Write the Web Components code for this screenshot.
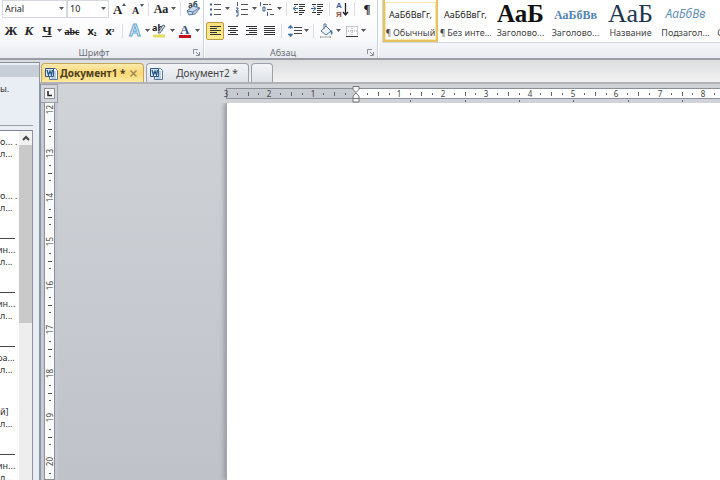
<!DOCTYPE html>
<html lang="ru">
<head>
<meta charset="utf-8">
<title>Документ1</title>
<style>
  html, body { height: 100%; }
  body { margin: 0; overflow: hidden; font: 9px/12px "Noto Sans", "Open Sans", sans-serif; color: #333; }
</style>
</head>
<body>
<word-app></word-app>
<script>
const define = (name, html, setup) => {
  const template = document.createElement('template');
  template.innerHTML = html;
  customElements.define(name, class extends HTMLElement {
    constructor() {
      super();
      this.attachShadow({ mode: 'open' }).append(template.content.cloneNode(true));
    }
    connectedCallback() { if (setup) setup(this, this.shadowRoot); }
  });
};

const rows = (x, widths, y = 4) => widths.map((w, i) => `<path d="M${x} ${y + i * 2}.5h${w}" stroke="#333"/>`).join('');
const icons = {
  grow: '<text x="4" y="14" font-size="13" font-weight="700">A</text><path d="M13 6l2-3 2 3z" fill="#456"/>',
  shrink: '<text x="5" y="14" font-size="10" font-weight="700">A</text><path d="M13 4h4l-2 3z" fill="#456"/>',
  clear: '<text x="4" y="8" font-size="8" fill="#345" font-family="Noto Sans">аб</text><path d="M3 11l6-5 7 2-5 6-6 1z" fill="#c9daee" stroke="#58779e"/><path d="M3 11l6 1 6-4M9 12l-1 3" fill="none" stroke="#58779e"/>',
  effects: '<text x="3" y="14" font-size="16" fill="#e8f5fd" stroke="#65a5d2" stroke-width="1" font-family="Liberation Sans">A</text>',
  marker: '<text x="1" y="9" font-size="9" font-weight="700" font-family="Noto Sans">ab</text><path d="M7 11l5-8 2 1-5 7z" fill="#dce5ee" stroke="#567"/><path d="M2 14h12" stroke="#e2dc62" stroke-width="3"/>',
  color: '<text x="4" y="12" font-size="13" font-weight="700" fill="#36517c">A</text><path d="M3 14.5h12" stroke="#c3121b" stroke-width="3"/>',
  bullets: '<path d="M4 4.500h2M4 9.500h2M4 14.500h2" stroke="#3c5f91" stroke-width="2"/><path d="M8 4.500h7M8 9.500h7M8 14.500h7" stroke="#555"/>',
  numbers: '<path d="M4.500 2v4M3 8h2v1l-2 2h3M3 12h2v4H3" fill="none" stroke="#3c5f91"/><path d="M8 4.500h7M8 9.500h7M8 14.500h7" stroke="#555"/>',
  multi: '<path d="M2.500 2v4M5 7h2v4H5zM9.500 12v4" fill="none" stroke="#3c5f91"/><path d="M5 4.500h8M9 9.500h6M12 14.500h4" stroke="#555" stroke-dasharray="5 1"/>',
  outdent: '<path d="M4 4.500h4M9 4.500h6M9 6.500h6M9 8.500h4M9 10.500h6M4 12.500h4M9 12.500h5M9 14.500h3" stroke="#333"/><path d="M8 8.500H4M6 6L3 8.500 6 11" fill="none" stroke="#3465a4"/>',
  indent: '<path d="M4 4.500h4M9 4.500h6M9 6.500h6M9 8.500h4M9 10.500h6M4 12.500h4M9 12.500h5M9 14.500h3" stroke="#333"/><path d="M3 8.500h4M5 6l3 2.500L5 11" fill="none" stroke="#3465a4"/>',
  sort: '<text x="3" y="8" font-size="8" fill="#345da0" font-family="Liberation Sans">А</text><text x="3" y="17" font-size="8" fill="#8d4b39" font-family="Liberation Sans">Я</text><path d="M12.500 3v11M10 12l2.500 3 2.500-3" fill="none" stroke="#222" stroke-width="1.300"/>',
  left: rows(4, [11, 7, 11, 7, 11]),
  center: '<path d="M4 4.500h10M6 6.500h6M4 8.500h10M6 10.500h6M4 12.500h10" stroke="#333"/>',
  right: '<path d="M4 4.500h11M7 6.500h8M4 8.500h11M7 10.500h8M4 12.500h11" stroke="#333"/>',
  justify: rows(4, [11, 11, 11, 11, 11]),
  spacing: '<path d="M9 5.500h8M9 8.500h8M9 11.500h8" stroke="#444"/><path d="M5.500 4v3M5.500 11v3M3 6l2.500-3L8 6zM3 12l2.500 3L8 12z" fill="#3d75a8" stroke="#3d75a8" stroke-width=".5"/>',
  fill: '<path d="M4 9l5-5 5 5-5 4z" fill="#eef3f8" stroke="#547595"/><path d="M9 4V2H7v5" fill="none" stroke="#547595"/><path d="M13 8c3 0 3 3 2 5-2-1-1-3-2-5z" fill="#3c77ae"/><path d="M3 15h11" stroke="#aaa" stroke-width="2"/><path d="M4 15h9" stroke="#f4f4f4"/>',
  borders: '<path d="M4.500 4.500h11v9M4.500 4.500v9M10 4v9M4 9h12" fill="none" stroke="#999" stroke-dasharray="1 1"/><path d="M4 14.500h12" stroke="#333"/>'
};

/* One ribbon command; "split" adds a drop-down arrow. */
define('tool-button', `
<style>
  :host { display: flex; flex: none; }
  button { all: unset; display: flex; align-items: center; justify-content: center; box-sizing: border-box; width: 18px; height: 18px; color: #222; font-family: "Liberation Serif", serif; font-size: 13px; font-weight: 700; line-height: 18px; }
  :host([split]) button { width: 25px; }
  .face { display: block; min-width: 18px; text-align: center; white-space: nowrap; }
  .face svg { display: block; }
  .arrow { display: none; width: 7px; height: 4px; }
  :host([split]) .arrow { display: block; }
  :host([pressed]) button { background: linear-gradient(#fbdf7c, #faec90); border: 1px solid #bd9b45; border-radius: 2px; }
</style>
<button type="button"><span class="face"><slot></slot></span><svg class="arrow" viewBox="0 0 7 4"><path d="M1 0h5L3.500 3z" fill="#555"/></svg></button>`,
(host, root) => {
  root.querySelector('button').setAttribute('aria-label', host.getAttribute('label'));
  const icon = host.getAttribute('icon');
  if (icon) root.querySelector('.face').innerHTML = `<svg width="18" height="18" viewBox="0 0 18 18" fill="#222" font-family="Liberation Serif, serif">${icons[icon]}</svg>`;
});

define('tool-divider', `<style>:host { flex: none; width: 1px; height: 14px; margin: 0 3px; background: #d9dce2; }</style>`);

define('tool-combo', `
<style>
  :host { display: block; flex: none; width: var(--combo, 65px); position: relative; }
  select { appearance: none; display: block; box-sizing: border-box; width: 100%; height: 18px; margin: 0; padding: 0 2px; border: 1px solid #d5d8de; border-radius: 0; background: #fff; color: #222; font: 9px/16px "Noto Sans", sans-serif; }
  svg { position: absolute; right: 2px; top: 7px; width: 7px; height: 4px; pointer-events: none; }
</style>
<select><option></option></select><svg viewBox="0 0 7 4"><path d="M1 0h5L3.500 3z" fill="#555"/></svg>`,
(host, root) => {
  root.querySelector('select').setAttribute('aria-label', host.getAttribute('label'));
  root.querySelector('option').textContent = host.getAttribute('value');
});

define('ribbon-group', `
<style>
  :host { display: grid; grid-template-rows: 18px 18px 1fr; row-gap: 4px; flex: none; box-sizing: border-box; border-right: 1px solid #cdd1d8; box-shadow: 1px 0 #fff; padding: 0 2px; position: relative; }
  div { display: flex; align-items: center; }
  footer { display: flex; align-items: center; justify-content: center; padding: 4px 16px 0 0; color: #6b6f77; font-size: 9px; line-height: 10px; }
  svg { position: absolute; right: 3px; bottom: 2px; }
</style>
<div><slot name="top"></slot></div>
<div><slot name="bottom"></slot></div>
<footer><slot></slot></footer>
<svg width="7" height="7" viewBox="0 0 7 7" fill="none" stroke="#8b909a"><path d="M.5 5V.5H5M3 3l3 3M6.500 3v3.500H3"/></svg>`);

define('style-card', `
<style>
  :host { display: block; flex: none; width: 55px; }
  button { all: unset; box-sizing: border-box; display: grid; grid-template-columns: 100%; grid-template-rows: 23px 16px; width: 55px; height: 42px; padding-top: 1px; border: 2px solid transparent; border-top: 0; text-align: center; overflow: hidden; }
  :host([selected]) button { border: 2px solid #e6c361; border-top: 0; outline: 1px solid #f8e7ad; outline-offset: -3px; }
  .sample { display: block; height: 23px; overflow: hidden; white-space: nowrap; font: var(--sample, 9px/28px "Noto Sans", sans-serif); color: var(--ink, #222); }
  .name { font-size: 9px; line-height: 18px; white-space: nowrap; color: #444; }
  .mark { font-size: 8px; margin-right: 2px; }
  .mark:empty { display: none; }
</style>
<button type="button"><span class="sample"></span><span class="name"><span class="mark"></span><span class="label"></span></span></button>`,
(host, root) => {
  root.querySelector('.sample').textContent = host.getAttribute('sample');
  root.querySelector('.mark').textContent = host.hasAttribute('paragraph') ? '¶' : '';
  root.querySelector('.label').textContent = host.getAttribute('name');
});

define('style-gallery', `
<style>
  :host { display: block; flex: 1; min-width: 0; padding-left: 4px; overflow: hidden; }
  div { display: flex; height: 42px; background: #fff; border: 1px solid #d3d6dc; border-top: 0; border-right: 0; }
  .h1 { --sample: 700 25px/26px "Liberation Serif", serif; --ink: #111; }
  .h2 { --sample: 700 12px/28px "Liberation Serif", serif; --ink: #5384b0; }
  .title { --sample: 26px/26px "Liberation Serif", serif; --ink: #1e3550; }
  .sub { --sample: italic 12px/26px "Noto Sans", serif; --ink: #6390b5; }
</style>
<div>
  <style-card selected paragraph sample="АаБбВвГг," name="Обычный"></style-card>
  <style-card paragraph sample="АаБбВвГг," name="Без инте..."></style-card>
  <style-card class="h1" sample="АаБ" name="Заголово..."></style-card>
  <style-card class="h2" sample="АаБбВв" name="Заголово..."></style-card>
  <style-card class="title" sample="АаБ" name="Название"></style-card>
  <style-card class="sub" sample="АаБбВв" name="Подзагол..."></style-card>
  <style-card class="sub" sample="АаБбВв" name="Слабое в..."></style-card>
</div>`);

define('word-ribbon', `
<style>
  :host { display: flex; box-sizing: border-box; height: 60px; background: linear-gradient(#fff, #fbfbfd 60%, #e9ebf1); border-bottom: 2px solid #9a9da6; }
  .size { --combo: 42px; }
  .font { width: 204px; }
  .para { width: 174px; }
  tool-button.wide { margin-right: 2px; }
  small { font-size: 7px; line-height: 8px; }
  .struck { font-size: 10px; }
  .x { font: 700 11px/18px "Noto Sans", sans-serif; }
  .aa { font-size: 12px; }
</style>
<ribbon-group class="font">
  <tool-combo slot="top" label="Шрифт" value="Arial"></tool-combo>
  <tool-combo slot="top" class="size" label="Размер шрифта" value="10"></tool-combo>
  <tool-button slot="top" label="Увеличить размер" icon="grow"></tool-button>
  <tool-button slot="top" label="Уменьшить размер" icon="shrink"></tool-button>
  <tool-divider slot="top"></tool-divider>
  <tool-button slot="top" split label="Регистр"><span class="aa">Aa</span></tool-button>
  <tool-divider slot="top"></tool-divider>
  <tool-button slot="top" label="Очистить формат" icon="clear"></tool-button>
  <tool-button slot="bottom" label="Полужирный">Ж</tool-button>
  <tool-button slot="bottom" label="Курсив"><i>К</i></tool-button>
  <tool-button slot="bottom" split label="Подчеркнутый"><u>Ч</u></tool-button>
  <tool-button slot="bottom" class="wide" label="Зачеркнутый"><s class="struck">abc</s></tool-button>
  <tool-button slot="bottom" label="Подстрочный"><span class="x">x<small>₂</small></span></tool-button>
  <tool-button slot="bottom" label="Надстрочный"><span class="x">x<small>²</small></span></tool-button>
  <tool-divider slot="bottom"></tool-divider>
  <tool-button slot="bottom" split label="Эффекты" icon="effects"></tool-button>
  <tool-button slot="bottom" split label="Выделение" icon="marker"></tool-button>
  <tool-button slot="bottom" split label="Цвет текста" icon="color"></tool-button>
  Шрифт
</ribbon-group>
<ribbon-group class="para">
  <tool-button slot="top" class="wide" split label="Маркеры" icon="bullets"></tool-button>
  <tool-button slot="top" split label="Нумерация" icon="numbers"></tool-button>
  <tool-button slot="top" split label="Многоуровневый список" icon="multi"></tool-button>
  <tool-divider slot="top"></tool-divider>
  <tool-button slot="top" label="Уменьшить отступ" icon="outdent"></tool-button>
  <tool-button slot="top" label="Увеличить отступ" icon="indent"></tool-button>
  <tool-divider slot="top"></tool-divider>
  <tool-button slot="top" label="Сортировка" icon="sort"></tool-button>
  <tool-divider slot="top"></tool-divider>
  <tool-button slot="top" label="Знаки абзаца">¶</tool-button>
  <tool-button slot="bottom" pressed label="По левому краю" icon="left"></tool-button>
  <tool-button slot="bottom" label="По центру" icon="center"></tool-button>
  <tool-button slot="bottom" label="По правому краю" icon="right"></tool-button>
  <tool-button slot="bottom" label="По ширине" icon="justify"></tool-button>
  <tool-divider slot="bottom"></tool-divider>
  <tool-button slot="bottom" split label="Интервал" icon="spacing"></tool-button>
  <tool-divider slot="bottom"></tool-divider>
  <tool-button slot="bottom" split label="Заливка" icon="fill"></tool-button>
  <tool-button slot="bottom" split label="Границы" icon="borders"></tool-button>
  Абзац
</ribbon-group>
<style-gallery></style-gallery>`);

define('side-pane', `
<style>
  :host { display: flex; flex-direction: column; flex: none; box-sizing: border-box; width: 40px; margin-top: 2px; border-top: 1px solid #8c929c; border-right: 1px solid #8c95a3; background: #e9edf4; overflow: hidden; }
  header { flex: none; height: 12px; margin-top: 2px; background: #c8ced8; }
  p { margin: 0; height: 12px; white-space: nowrap; color: #333; }
  .note { flex: none; height: 42px; padding-top: 6px; margin-right: 6px; border-bottom: 1px solid #9aa1ad; }
  .list { flex: 1; display: flex; min-height: 0; margin: 4px 6px 0 0; border-top: 1px solid #7f8794; border-right: 1px solid #8c95a3; background: #fff; }
  .items { flex: 1; min-width: 0; overflow: hidden; }
  article { display: grid; row-gap: 30px; margin-right: 4px; padding: 5px 0 24px; border-bottom: 1px solid #444; }
  article p.cut { margin-left: -3px; }
  .bar { flex: none; width: 13px; background: #eee; }
  .bar button { all: unset; display: block; width: 13px; height: 14px; background: #f1f1f1; }
  .bar svg { display: block; }
  .thumb { height: 178px; background: #c9c9c9; }
</style>
<header></header>
<div class="note"><p>ы.</p></div>
<div class="list">
  <div class="items">
    <article><div><p>о... .</p><p>л...</p></div><div><p>о... .</p><p>л...</p></div></article>
    <article><div><p class="cut">ин...</p><p>л...</p></div></article>
    <article><div><p class="cut">ин...</p><p>л...</p></div></article>
    <article><div><p class="cut">ра...</p><p>л...</p></div><div><p>й]</p><p>л...</p></div></article>
    <article><div><p class="cut">ин...</p><p>л...</p></div></article>
  </div>
  <div class="bar"><button type="button" aria-label="Вверх"><svg width="13" height="14" viewBox="0 0 13 14"><path d="M4 9l3-3 3 3" fill="none" stroke="#444" stroke-width="2"/></svg></button><div class="thumb"></div></div>
</div>`);

define('doc-tab', `
<style>
  :host { display: block; flex: none; width: 103px; }
  :host([blank]) { width: 22px; }
  div { display: flex; align-items: center; box-sizing: border-box; height: 19px; padding: 0 5px 0 3px; border: 1px solid #9ba1aa; border-bottom: 0; border-radius: 4px 4px 0 0; background: linear-gradient(#f3f4f6, #dfe3e9); color: #444; }
  :host([active]) div { background: linear-gradient(#fdeaae, #fbd873 50%, #fde9a0); border-color: #c2a45c; font-weight: 700; color: #4a4125; }
  button { all: unset; }
  .title { flex: 1; padding-left: 8px; text-align: center; white-space: nowrap; font-size: 10px; line-height: 16px; }
  :host([active]) .title { padding-left: 2px; text-align: left; }
  .close, svg { flex: none; }
  .close { display: none; }
  .close svg, .icon { display: block; }
  :host([active]) .close { display: block; }
  :host([blank]) .icon { display: none; }
</style>
<div>
  <svg class="icon" width="13" height="13" viewBox="0 0 13 13"><path d="M4.500 1.500h6l2 2v9h-8z" fill="#fff" stroke="#55789f"/><path d="M9 5h2M9 7h2M9 9h2M6 11h5" stroke="#7c9abd"/><path d="M.5 1.500h8v8h-8z" fill="#dfeaf6" stroke="#2d5b91"/><path d="M2 3l1.500 5L5 4l1.500 4 1-5" fill="none" stroke="#24568e" stroke-width="1.300"/></svg>
  <button type="button" class="title"><slot></slot></button>
  <button type="button" class="close" aria-label="Закрыть"><svg width="9" height="9" viewBox="0 0 9 9"><path d="M1.500 1.500l6 6M7.500 1.500l-6 6" stroke="#9a8c5c" stroke-width="1.500"/></svg></button>
</div>`);

define('tab-strip', `
<style>
  :host { display: flex; flex: none; align-items: flex-end; gap: 2px; box-sizing: border-box; height: 24px; padding-left: 1px; background: linear-gradient(#dcdddf, #f2f2f2); border-bottom: 2px solid #b0b2b6; }
</style>
<doc-tab active>Документ1 *</doc-tab><doc-tab>Документ2 *</doc-tab><doc-tab blank></doc-tab>`);

/* Horizontal ruler: numbered centimetres with quarter dots, half strokes and tab stops below.
   Only the marks that fit the ruler's width are drawn. */
define('h-ruler', `
<style>
  :host { display: block; flex: none; height: 19px; margin-left: -4px; overflow: hidden; }
  svg { display: block; width: 100%; height: 19px; }
  text { font: 8px "Noto Sans", sans-serif; fill: #444; text-anchor: middle; }
</style>
<svg></svg>`,
(host, root) => {
  const zero = 134, cm = 43.4;
  const draw = () => {
    const width = host.clientWidth;
    let s = `<g shape-rendering="crispEdges"><path d="M4 5h130v10H4z" fill="#c6cad1"/><path d="M134 5h${width}v10H134z" fill="#fff"/><path d="M4 4.500h${width}M4 14.500h${width}M4.500 5v9" stroke="#8b9098"/></g>`;
    for (let n = -3; zero + n * cm < width; n++) {
      const at = k => Math.round(zero + (n + k) * cm);
      if (n && at(0) + 5 < width) s += `<text x="${at(0)}" y="13">${Math.abs(n)}</text>`;
      for (const k of [.25, .75]) s += `<rect x="${at(k)}" y="9" width="1" height="2" fill="#666"/>`;
      s += `<rect x="${at(.5)}" y="8" width="1" height="4" fill="#666"/>`;
    }
    for (let n = 1; zero + n * 54.3 < width; n++) s += `<rect x="${Math.round(zero + n * 54.3)}" y="16" width="1" height="2" fill="#666"/>`;
    s += `<path d="M131 2.500h6v3l-3 3-3-3zM131 12l3-3 3 3v6h-6zM131 14.500h6" fill="#f4f4f4" stroke="#777"/>`;
    root.querySelector('svg').innerHTML = s;
  };
  draw();
  addEventListener('resize', draw);
  requestAnimationFrame(draw);
});

define('v-ruler', `
<style>
  :host { display: flex; flex-direction: column; flex: none; box-sizing: border-box; width: 18px; overflow: hidden; background: #c5cad2; border-left: 1px solid #8c95a3; }
  button { all: unset; flex: none; display: grid; place-items: center; box-sizing: border-box; width: 17px; height: 19px; background: #d2d5da; border: 1px solid #9a9ea6; border-left: 0; }
  button svg { display: block; background: #f6f6f6; border: 1px solid #8d9199; }
  .scale { flex: 1; min-height: 0; overflow: hidden; width: 9px; margin-left: 3px; background: #fafafa; border: 1px solid #8b9098; border-top: 0; }
  .cm { display: grid; grid-template-rows: 14px 8px 8px 7px 7px; height: 44px; justify-items: center; align-items: center; }
  .cm span { writing-mode: vertical-rl; transform: rotate(180deg); font-size: 8px; line-height: 9px; color: #444; }
  .cm i { width: 2px; height: 1px; background: #555; }
  .cm i.half { width: 4px; }
</style>
<button type="button" aria-label="Табуляция"><svg width="9" height="9" viewBox="0 0 9 9"><path d="M3 2v4.500h4" fill="none" stroke="#222" stroke-width="1.500"/></svg></button>
<div class="scale"></div>`,
(host, root) => {
  const scale = root.querySelector('.scale');
  const draw = () => {
    let s = '';
    for (let n = 12; (n - 12) * 44 + 14 < innerHeight - 103; n++) s += `<div class="cm"><span>${n}</span><i></i><i class="half"></i><i></i></div>`;
    scale.innerHTML = s;
  };
  draw();
  addEventListener('resize', draw);
});

define('doc-area', `
<style>
  :host { display: flex; flex: 1; min-height: 0; }
  .canvas { flex: 1; min-width: 0; display: flex; flex-direction: column; padding-left: 168px; background: linear-gradient(#d0d3d8, #bfc2c8); }
  .page { flex: 1; background: #fff; box-shadow: -2px 0 4px #7d8188aa; border-left: 1px solid #a5a8ae; clip-path: inset(0 0 0 -8px); }
</style>
<v-ruler></v-ruler>
<div class="canvas"><h-ruler></h-ruler><main class="page"></main></div>`);

define('word-app', `
<style>
  :host { display: flex; flex-direction: column; height: 100vh; background: #d9dbde; }
  .body { flex: 1; display: flex; min-height: 0; }
  section { flex: 1; min-width: 0; display: flex; flex-direction: column; }
</style>
<word-ribbon></word-ribbon>
<div class="body"><side-pane></side-pane><section><tab-strip></tab-strip><doc-area></doc-area></section></div>`);
</script>
</body>
</html>
